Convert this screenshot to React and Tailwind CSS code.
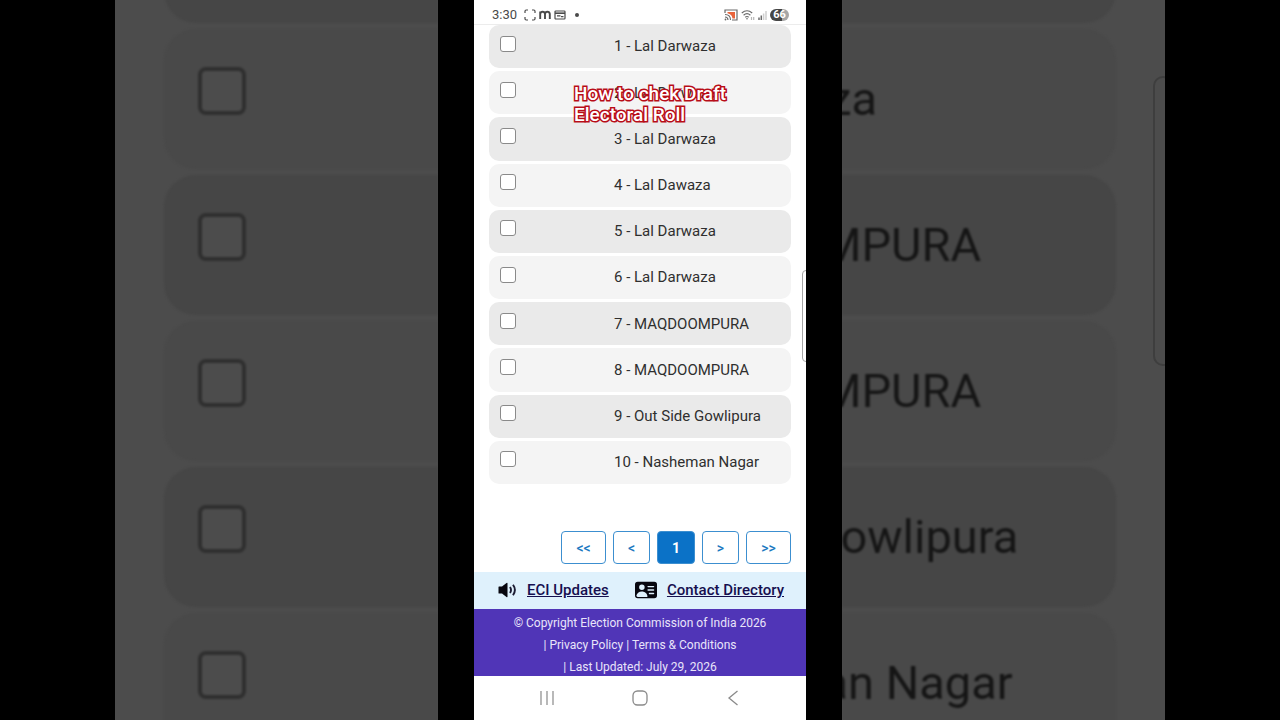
import React, { useState } from 'react';
import { BsPersonVcardFill } from 'react-icons/bs';

const parts = [
  '1 - Lal Darwaza',
  '2 - Lal Darwaza',
  '3 - Lal Darwaza',
  '4 - Lal Dawaza',
  '5 - Lal Darwaza',
  '6 - Lal Darwaza',
  '7 - MAQDOOMPURA',
  '8 - MAQDOOMPURA',
  '9 - Out Side Gowlipura',
  '10 - Nasheman Nagar'
];

// Rows that show through in the dimmed, enlarged backdrop
const backdropParts = parts.slice(4);

const pages = [
  { label: '<<', name: 'First page', width: 'w-[45px]' },
  { label: '<', name: 'Previous page', width: 'w-[37px]' },
  { label: '1', name: 'Page 1', width: 'w-[38px]', current: true },
  { label: '>', name: 'Next page', width: 'w-[37px]' },
  { label: '>>', name: 'Last page', width: 'w-[45px]' }
];

const BackdropLeft = () => (
  <div aria-hidden="true" className="h-full overflow-hidden bg-[#4c4c4c] pl-[49px]">
    <div className="-mt-[117px] flex flex-col gap-1.5 blur-[1px]">
      {backdropParts.map((part, index) => (
        <div
          key={part}
          className={`h-[140px] shrink-0 rounded-l-[32px] pt-[38px] pl-[34px] ${index % 2 ? 'bg-[#494949]' : 'bg-[#464646]'}`}
        >
          <div className="size-12 rounded-lg border-4 border-[#2f2f2f] bg-[#4c4c4c]" />
        </div>
      ))}
    </div>
  </div>
);

const BackdropRight = () => (
  <div aria-hidden="true" className="relative h-full overflow-hidden bg-[#4c4c4c] pr-[49px]">
    <div className="-mt-[117px] flex flex-col gap-1.5 blur-[1px]">
      {backdropParts.map((part, index) => (
        <div
          key={part}
          className={`flex h-[140px] shrink-0 items-center rounded-r-[32px] ${index % 2 ? 'bg-[#494949]' : 'bg-[#464646]'}`}
        >
          <span className="-ml-[284px] text-[47px] whitespace-nowrap text-[#151515]">{part}</span>
        </div>
      ))}
    </div>
    <div className="absolute top-[76px] -right-2 h-[290px] w-5 rounded-xl border-2 border-[#3e3e3e]" />
  </div>
);

const StatusBar = () => (
  <header className="flex h-[25px] shrink-0 items-center justify-between border-b border-[#ececec] pt-1.5 pr-[17px] pl-[18px] text-[#4a4a4a]">
    <div className="flex items-center gap-[3px]">
      <span className="text-[13px]">3:30</span>
      <svg viewBox="0 0 12 12" className="ml-1 size-3" fill="none" stroke="currentColor" strokeWidth="1.2">
        <path d="M1 4V2.200Q1 1 2.200 1H4M8 1h1.800Q11 1 11 2.200V4M11 8v1.800Q11 11 9.800 11H8M4 11H2.200Q1 11 1 9.800V8" />
      </svg>
      <svg viewBox="0 0 12 10" className="h-2.5 w-3" fill="none" stroke="currentColor" strokeWidth="1.9">
        <path d="M1.200 9V1.500M1.200 4Q1.500 1.800 3.600 1.800T6 4V9M6 4Q6.300 1.800 8.400 1.800T10.800 4V9" />
      </svg>
      <svg viewBox="0 0 12 10" className="h-2.5 w-3" fill="none" stroke="currentColor" strokeWidth="1.2">
        <rect x="1" y="1" width="10" height="8" rx="0.8" />
        <path d="M1 3.200h10" strokeWidth="1.600" />
        <path d="M3 5.800h3.500M7 6.600h2.500" strokeWidth="1.200" />
      </svg>
      <span className="ml-1.5 size-1 rounded-full bg-current" />
    </div>
    <div className="flex items-center gap-[3px]">
      <svg viewBox="0 0 14 12" className="h-3 w-3.5" fill="none">
        <path d="M1 4V1h12v10H8" stroke="#6a6a6a" strokeWidth="1.200" />
        <path d="M3.500 3H11v6.500H8.500Q8 5 3.500 4.200z" fill="#e8643c" />
        <path d="M1 5.500Q6.500 5.500 6.500 11M1 8Q4 8 4 11" stroke="#6a6a6a" strokeWidth="1.100" />
        <circle cx="1.500" cy="10.500" r="0.900" fill="#6a6a6a" />
      </svg>
      <svg viewBox="0 0 14 12" className="h-3 w-3.5" fill="none" stroke="#6a6a6a" strokeWidth="1.200">
        <path d="M0.800 4Q6 -0.500 11.200 4M2.600 6.200Q6 3.200 9.400 6.200" />
        <path d="M4.300 8.200Q6 6.800 7.700 8.200" />
        <circle cx="6" cy="9.800" r="0.800" fill="#6a6a6a" stroke="none" />
        <path d="M10.500 8v3M12.700 8v3" stroke="#b5b5b5" />
      </svg>
      <svg viewBox="0 0 9 10" className="h-2.5 w-[9px]" fill="none" strokeWidth="1.500">
        <path d="M1 10V7.500M3.300 10V5.500" stroke="#6a6a6a" />
        <path d="M5.600 10V3.500M8 10V1" stroke="#cfcfcf" />
      </svg>
      <span className="flex h-3 w-[19px] items-center justify-center rounded-full bg-linear-to-r from-[#454545] from-65% to-[#a6a6a6] to-65% text-[11px] font-bold text-white">
        66
      </span>
    </div>
  </header>
);

const PartList = () => {
  const [selected, setSelected] = useState([]);

  const toggle = (part) => {
    setSelected((prev) => (prev.includes(part) ? prev.filter((p) => p !== part) : [...prev, part]));
  };

  return (
    <ul className="flex h-[459px] shrink-0 flex-col gap-[3px] px-[15px]">
      {parts.map((part) => (
        <li key={part} className="flex-1 rounded-[10px] odd:bg-[#eaeaea] even:bg-[#f4f4f4]">
          <label className="flex h-full items-center pl-[11px]">
            <input
              type="checkbox"
              checked={selected.includes(part)}
              onChange={() => toggle(part)}
              className="mb-1.5 size-4 appearance-none rounded-[3px] border border-[#8a8a8a] bg-white checked:bg-[#0b72c7]"
            />
            <span className="ml-[98px] text-[15px] text-[#2f2f2f]">{part}</span>
          </label>
        </li>
      ))}
    </ul>
  );
};

const Pagination = () => (
  <nav aria-label="Pagination" className="flex shrink-0 justify-end gap-[7px] pt-[47px] pr-[15px] pb-2">
    {pages.map(({ label, name, width, current }) => (
      <button
        key={name}
        type="button"
        aria-label={name}
        className={`h-[33px] rounded border border-[#3c8fd0] ${width} ${
          current ? 'bg-[#0b72c7] text-sm font-bold text-white' : 'bg-white text-sm font-medium text-[#1b78bf]'
        }`}
      >
        {label}
      </button>
    ))}
  </nav>
);

const VolumeIcon = () => (
  <svg viewBox="0 0 20 16" className="h-4 w-5" fill="none">
    <path d="M1.500 5Q1.500 4.500 2 4.500H5L9.500 1Q10.500 0.400 10.500 1.500v13Q10.500 15.600 9.500 15L5 11.500H2Q1.500 11.500 1.500 11z" fill="#07070f" />
    <path d="M13 5Q15 8 13 11M16 2.800Q19.800 8 16 13.200" stroke="#1c1c33" strokeWidth="1.900" />
  </svg>
);

const Footer = () => (
  <footer className="shrink-0">
    <div className="flex h-[37px] items-center justify-between bg-[#dff1fc] pr-[22px] pb-px pl-[23px] text-[15px] font-medium text-[#150f4f]">
      <a href="#updates" className="flex items-center gap-2.5">
        <VolumeIcon />
        <span className="underline">ECI Updates</span>
      </a>
      <a href="#contacts" className="flex items-center gap-2.5">
        <BsPersonVcardFill className="size-[22px] text-[#07070f]" />
        <span className="underline">Contact Directory</span>
      </a>
    </div>
    <div className="h-[67px] bg-[#5035b7] pt-[3px] text-center text-xs leading-[22px] text-[#e9e4fa]">
      <p>© Copyright Election Commission of India 2026</p>
      <p>
        | <a href="#privacy">Privacy Policy</a> | <a href="#terms">Terms &amp; Conditions</a>
      </p>
      <p>| Last Updated: July 29, 2026</p>
    </div>
  </footer>
);

const NavigationBar = () => (
  <div className="flex flex-1 items-center justify-around px-[27px] text-[#8a8a8a]">
    <button type="button" aria-label="Recent apps">
      <svg viewBox="0 0 16 16" className="size-4" fill="none" stroke="currentColor" strokeWidth="1.200">
        <path d="M2 1v14M8 1v14M14 1v14" />
      </svg>
    </button>
    <button type="button" aria-label="Home">
      <svg viewBox="0 0 16 16" className="size-4" fill="none" stroke="currentColor" strokeWidth="1.300">
        <rect x="1" y="1" width="14" height="14" rx="4.500" />
      </svg>
    </button>
    <button type="button" aria-label="Back">
      <svg viewBox="0 0 16 16" className="size-4" fill="none" stroke="currentColor" strokeWidth="1.300">
        <path d="M12.500 1L4 8l8.500 7" />
      </svg>
    </button>
  </div>
);

const App = () => (
  <div className="grid h-screen grid-cols-[1fr_404px_1fr] overflow-hidden bg-black px-[9%] font-['Roboto',sans-serif]">
    <BackdropLeft />

    <main className="h-full overflow-hidden px-9">
      <div className="relative flex h-full flex-col overflow-hidden bg-white">
        <StatusBar />
        <PartList />
        <Pagination />
        <Footer />
        <NavigationBar />

        {/* Video caption */}
        <h1 className="absolute top-[83px] left-[100px] w-40 text-[19px] leading-[21px] font-medium text-white [-webkit-text-stroke:3px_#b80d18] [paint-order:stroke_fill]">
          How to chek Draft Electoral Roll
        </h1>

        {/* Edge panel handle */}
        <div className="absolute top-[270px] -right-1 h-[92px] w-2 rounded-md border border-[#a5a5a5] bg-white" />
      </div>
    </main>

    <BackdropRight />
  </div>
);

export default App;
